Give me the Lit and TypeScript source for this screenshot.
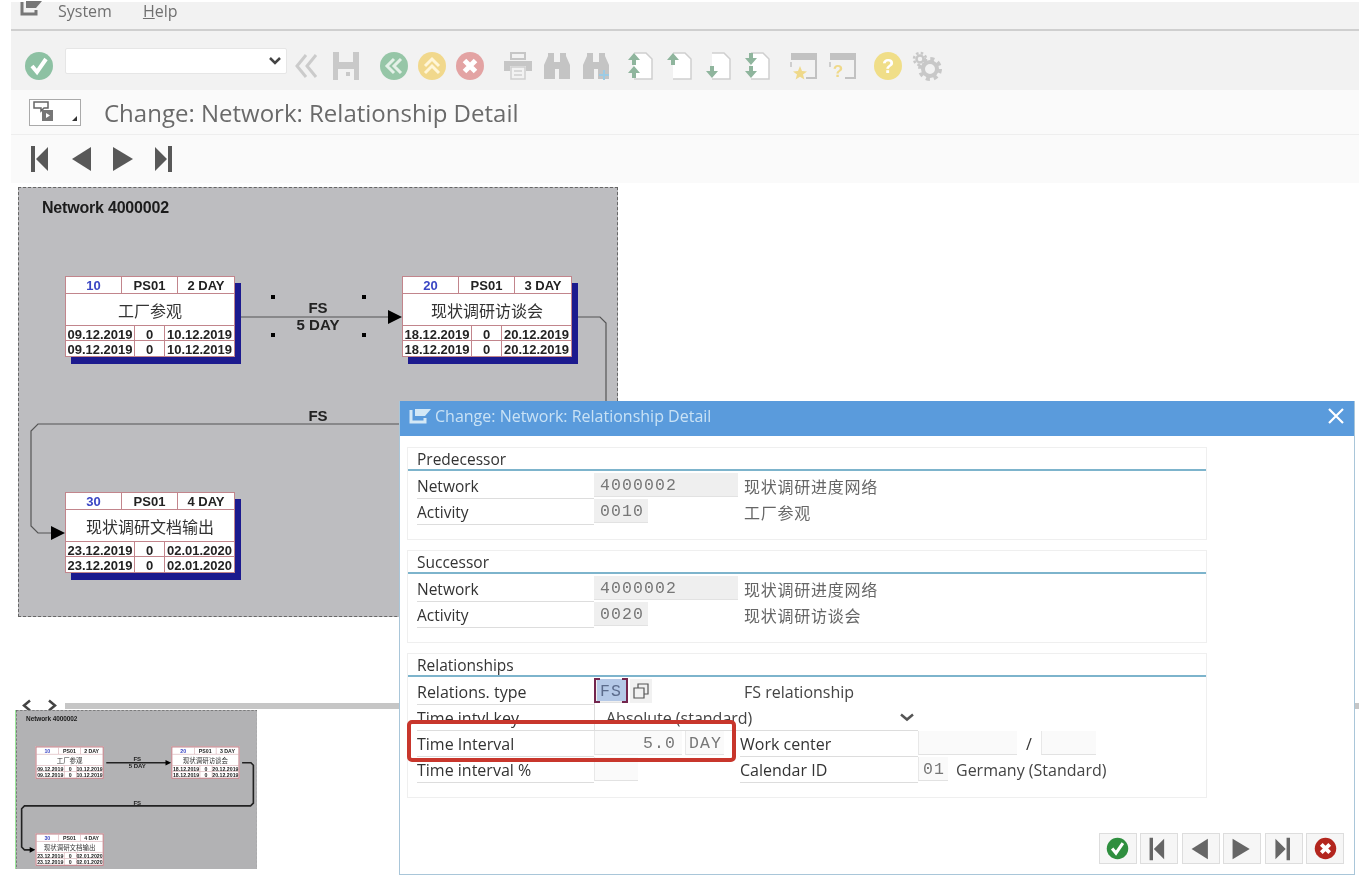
import { LitElement, html, css, svg } from "lit";
import { customElement } from "lit/decorators.js";

const windowIcon = (color: string) => html`<svg class="win-icon" viewBox="0 0 22 16" fill="none">
  <path d="M2 2V14H16V10" stroke=${color} stroke-width="3" />
  <path d="M6 1H22L16 8H6Z" fill=${color} />
</svg>`;

const statusIcon = (color: string, glyph: unknown, size = 30) => html`<svg width=${size} height=${size} viewBox="0 0 30 30">
  <circle cx="15" cy="15" r="14" fill=${color} />
  ${glyph}
</svg>`;

const checkGlyph = svg`<path d="M8 15l5 6 9-13" fill="none" stroke="#fff" stroke-width="4" />`;
const crossGlyph = svg`<path d="M9.5 9.5l11 11M20.5 9.5l-11 11" fill="none" stroke="#fff" stroke-width="5" />`;
const backGlyph = svg`<path d="M15 8l-7 7 7 7M22 8l-7 7 7 7" fill="none" stroke="#e4f1e8" stroke-width="3" />`;
const upGlyph = svg`<path d="M8 15l7-7 7 7M8 22l7-7 7 7" fill="none" stroke="#fff6d8" stroke-width="3" />`;
const helpGlyph = svg`<text x="15" y="22" text-anchor="middle" font-size="20" font-weight="700" font-family="Liberation Sans" fill="#fff">?</text>`;

const icon = (body: unknown) => html`<svg width="30" height="30" viewBox="0 0 30 30">${body}</svg>`;

const binoculars = svg`<path d="M2 28V14L6 5V2H12V11H18V2H24V5L28 14V28H17V18H13V28Z" fill="#c4c4c4" />`;

const page = (arrows: unknown) => icon(svg`
  <path d="M9 2H21L27 8V28H9" fill="#fff" stroke="#cfcfcf" stroke-width="1.5" />
  ${arrows}
`);
const arrowUp = (y: number) => svg`<path d=${`M9 ${y}l-6 7h4v5h4v-5h4z`} fill="#8fb59d" />`;
const arrowDown = (y: number) => svg`<path d=${`M9 ${y + 12}l-6-7h4v-5h4v5h4z`} fill="#8fb59d" />`;

const frame = (mark: unknown) => icon(svg`
  <path d="M3 3H28V27H18" fill="none" stroke="#c2c2c2" stroke-width="2" />
  <path d="M3 3H28V9H3Z" fill="#c2c2c2" />
  <path d="M3 11V16" stroke="#c2c2c2" stroke-width="1.5" />
  ${mark}
`);

const toolbarGroups: unknown[][] = [
  [
    icon(svg`<path d="M14 4L5 15L14 26M24 4L15 15L24 26" fill="none" stroke="#cbcbcb" stroke-width="3" />`),
    icon(svg`<path d="M2 1H28V29H2Z" fill="#c9c9c9" /><rect x="8" y="1" width="14" height="10" fill="#f2f2f2" /><rect x="7" y="18" width="16" height="11" fill="#f2f2f2" /><rect x="15" y="21" width="4" height="4" fill="#c9c9c9" />`),
  ],
  [statusIcon("#96c6a7", backGlyph), statusIcon("#f1d88c", upGlyph), statusIcon("#e3a3a3", crossGlyph)],
  [
    icon(svg`<rect x="8" y="2" width="14" height="6" fill="none" stroke="#c6c6c6" stroke-width="2" /><path d="M1 10H29V20H23V15H7V20H1Z" fill="#c6c6c6" /><path d="M8 16H22V28H8ZM11 20H19M11 24H19" fill="none" stroke="#cfcfcf" stroke-width="1.5" />`),
    icon(binoculars),
    icon(svg`${binoculars}<path d="M23 19V29M18 24H28" stroke="#9ccbe4" stroke-width="2" />`),
  ],
  [
    page(svg`${arrowUp(2)}${arrowUp(15)}`),
    page(svg`${arrowUp(2)}`),
    page(svg`${arrowDown(15)}`),
    page(svg`${arrowDown(2)}${arrowDown(15)}`),
  ],
  [
    frame(svg`<path d="M12 15l2 5 5 .4-4 3.2 1.4 5-4.400-2.800-4.400 2.800 1.400-5-4-3.200 5-.4z" fill="#efd98a" />`),
    frame(svg`<text x="11" y="26" text-anchor="middle" font-size="17" font-weight="700" font-family="Liberation Sans" fill="#efd98a">?</text>`),
  ],
  [
    statusIcon("#f0de88", helpGlyph),
    icon(svg`
      <circle cx="18" cy="18" r="7" fill="none" stroke="#c8c8c8" stroke-width="4" />
      <circle cx="18" cy="18" r="10" fill="none" stroke="#c8c8c8" stroke-width="4" stroke-dasharray="4 3.850" />
      <circle cx="8" cy="8" r="3.500" fill="none" stroke="#c8c8c8" stroke-width="2.500" />
      <circle cx="8" cy="8" r="6" fill="none" stroke="#c8c8c8" stroke-width="2.500" stroke-dasharray="2.500 2.210" />
    `),
  ],
];

const navFirst = svg`<path d="M3 1H7V27H3ZM20 2V26L8 14Z" />`;
const navPrev = svg`<path d="M22 2V26L3 14Z" />`;
const navNext = svg`<path d="M3 2V26L23 14Z" />`;
const navLast = svg`<path d="M17 1H21V27H17ZM4 2V26L16 14Z" />`;

const activities = [
  { x: 65, y: 277, no: "10", days: "2 DAY", name: "工厂参观", start: "09.12.2019", end: "10.12.2019" },
  { x: 402, y: 277, no: "20", days: "3 DAY", name: "现状调研访谈会", start: "18.12.2019", end: "20.12.2019" },
  { x: 65, y: 493, no: "30", days: "4 DAY", name: "现状调研文档输出", start: "23.12.2019", end: "02.01.2020" },
];

@customElement("net-diagram")
export class NetDiagram extends LitElement {
  static styles = css`
    :host {
      display: block;
      font-family: "Liberation Sans", "Noto Sans CJK SC", sans-serif;
    }
    .canvas {
      position: relative;
      box-sizing: border-box;
      width: 600px;
      height: 430px;
      background: #bdbdc0;
      border: 1px dashed #666;
    }
    :host([mini]) .canvas {
      background: #b2b2b4;
      border-width: 2px;
    }
    .heading {
      position: absolute;
      left: 23px;
      top: 11px;
      font-size: 16px;
      font-weight: 700;
      letter-spacing: -0.2px;
      color: #1c1c1c;
    }
    .links {
      position: absolute;
      left: -1px;
      top: -1px;
    }
    .edge {
      fill: none;
      stroke: #555;
      stroke-width: 1.2;
    }
    :host([mini]) .edge {
      stroke: #222;
      stroke-width: 4;
    }
    :host([mini]) .dot {
      display: none;
    }
    .links text {
      font-size: 15px;
      font-weight: 700;
      fill: #222;
      text-anchor: middle;
    }
    .node {
      position: absolute;
      box-sizing: border-box;
      width: 170px;
      height: 81px;
      display: grid;
      grid-template-rows: 17px 1fr 15px 15px;
      background: #fff;
      border: 1px solid #c2858c;
      box-shadow: 6px 7px 0 #1c1a8e;
      font-size: 13px;
      font-weight: 700;
      color: #222;
    }
    :host([mini]) .node {
      box-shadow: none;
      border-width: 3px;
    }
    .cells {
      display: grid;
      text-align: center;
      line-height: 17px;
      border-bottom: 1px solid #c2858c;
      overflow: hidden;
    }
    .cells:last-child {
      border-bottom: none;
    }
    .cells span {
      border-right: 1px solid #c2858c;
      white-space: nowrap;
    }
    .cells span:last-child {
      border-right: none;
    }
    .head {
      grid-template-columns: 1fr 1fr 1fr;
    }
    .dates {
      grid-template-columns: 69px 30px 1fr;
    }
    .no {
      color: #3a46c4;
    }
    .name {
      display: flex;
      align-items: center;
      justify-content: center;
      font-size: 16px;
      font-weight: 400;
      color: #333;
      border-bottom: 1px solid #c2858c;
    }
  `;

  render() {
    return html`
      <div class="canvas">
        <svg class="links" width="600" height="430" viewBox="18 188 600 430">
          <path class="edge" d="M241 318H390" />
          <path d="M388 311L402 318L388 325Z" fill="#000" />
          <path class="edge" d="M578 318H600L606 324V418L599 425H38L31 432V527L38 534H52" />
          <path d="M51 527L65 534L51 541Z" fill="#000" />
          <rect class="dot" x="271" y="296" width="4" height="4" />
          <rect class="dot" x="362" y="296" width="4" height="4" />
          <rect class="dot" x="271" y="334" width="4" height="4" />
          <rect class="dot" x="362" y="334" width="4" height="4" />
          <text x="318" y="314">FS</text>
          <text x="318" y="331">5 DAY</text>
          <text x="318" y="422">FS</text>
        </svg>
        <div class="heading">Network 4000002</div>
        ${activities.map(
          (a) => html`
            <div class="node" style="left:${a.x - 19}px;top:${a.y - 189}px">
              <div class="cells head">
                <span class="no">${a.no}</span><span>PS01</span><span>${a.days}</span>
              </div>
              <div class="name">${a.name}</div>
              <div class="cells dates"><span>${a.start}</span><span>0</span><span>${a.end}</span></div>
              <div class="cells dates"><span>${a.start}</span><span>0</span><span>${a.end}</span></div>
            </div>
          `
        )}
      </div>
    `;
  }
}

@customElement("app-root")
export class AppRoot extends LitElement {
  static styles = css`
    :host {
      display: block;
      position: relative;
      width: 1359px;
      height: 875px;
      overflow: hidden;
      background: #fff;
      font-family: "Open Sans", "Noto Sans CJK SC", sans-serif;
      filter: blur(0.35px);
    }
    .shell {
      margin-left: 11px;
      padding-top: 2px;
    }
    .menu {
      display: flex;
      align-items: center;
      height: 27px;
      border-bottom: 2px solid #cfcfcf;
      background: #f2f2f2;
      font-size: 16px;
      color: #707070;
    }
    .win-icon {
      width: 22px;
      height: 16px;
    }
    .menu .win-icon {
      margin: -16px 16px 0 9px;
    }
    .menu span {
      margin-top: -10px;
      margin-right: 31px;
    }
    .menu u {
      text-decoration-thickness: 1px;
    }
    .toolbar {
      display: flex;
      align-items: center;
      box-sizing: border-box;
      height: 59px;
      padding: 10px 0 0 12px;
      background: #f2f2f2;
    }
    .toolbar .first {
      display: flex;
      margin-left: 1px;
      margin-right: 11px;
    }
    .command {
      position: relative;
      width: 222px;
      height: 26px;
      margin-top: -10px;
      box-sizing: border-box;
      background: #fff;
      border: 1px solid #e6e6e6;
      border-radius: 2px;
    }
    .chevron {
      position: absolute;
      right: 5px;
      top: 8px;
    }
    .group {
      display: flex;
      margin-left: 7px;
    }
    .group:nth-child(3) {
      margin-left: 0;
    }
    .group:nth-child(4) {
      margin-left: 10px;
    }
    .group:nth-child(4) .tool {
      width: 38px;
    }
    .group:nth-child(5) {
      margin-left: 9px;
    }
    .group:nth-child(6) {
      margin-left: 5px;
    }
    .tool {
      display: flex;
      align-items: center;
      justify-content: center;
      width: 39px;
      height: 30px;
    }
    .titlebar {
      display: flex;
      align-items: center;
      height: 44px;
      background: #fafafa;
      border-bottom: 1px solid #eee;
      color: #6a6a6a;
      font-size: 24px;
    }
    .variant {
      position: relative;
      display: flex;
      align-items: center;
      box-sizing: border-box;
      width: 52px;
      height: 27px;
      margin: 0 23px 0 18px;
      padding-left: 2px;
      border: 1px solid #aaa;
      background: #fff;
    }
    .variant::after {
      content: "";
      position: absolute;
      right: 3px;
      bottom: 4px;
      border-left: 5px solid transparent;
      border-bottom: 5px solid #333;
    }
    .nav {
      display: flex;
      align-items: center;
      gap: 13px;
      height: 48px;
      padding-left: 17px;
      background: #fafafa;
      fill: #585858;
    }
    .nav svg {
      display: block;
    }
    .work {
      padding: 4px 0 0 7px;
    }
    .scroller {
      display: flex;
      align-items: center;
      height: 13px;
      margin-top: 82px;
      margin-left: 3px;
    }
    .scroller svg {
      margin-right: 13px;
    }
    .scroller svg + svg {
      margin-right: 7px;
    }
    .thumb {
      flex: 1;
      height: 6px;
      background: #c6c6c6;
    }
    .minimap {
      width: 242px;
      height: 159px;
      margin-left: -3px;
      margin-top: -2px;
      overflow: hidden;
      border-left: 1px solid #9be69b;
      box-sizing: border-box;
    }
    .minimap net-diagram {
      width: 600px;
      transform: scale(0.403);
      transform-origin: 0 0;
    }

    .dialog {
      position: absolute;
      left: 399px;
      top: 401px;
      box-sizing: border-box;
      width: 956px;
      height: 474px;
      background: #fff;
      border: 1px solid #a9c6d9;
      border-top: none;
      font-size: 15.5px;
      color: #333;
    }
    .dialog-title {
      display: flex;
      align-items: center;
      gap: 4px;
      box-sizing: border-box;
      height: 35px;
      padding: 0 9px 5px;
      background: #5a9bdc;
      color: #c9e2f5;
      font-size: 16px;
    }
    .close {
      margin-left: auto;
      margin-right: 1px;
    }
    .groups {
      display: flex;
      flex-direction: column;
      gap: 10px;
      width: 800px;
      margin: 11px 0 0 7px;
    }
    .box {
      padding-bottom: 16px;
      border: 1px solid #efefef;
    }
    .legend {
      height: 21px;
      padding-left: 9px;
      line-height: 23px;
      border-bottom: 2px solid #7db4cc;
    }
    .row {
      display: grid;
      grid-template-columns: 177px 146px 178px 1fr;
      height: 26px;
      margin-left: 9px;
      line-height: 24px;
    }
    .relations .row {
      font-size: 16px;
    }
    .lbl,
    .plain {
      box-sizing: border-box;
      padding-top: 3px;
      white-space: nowrap;
    }
    .lbl {
      border-bottom: 1px solid #ddd;
    }
    .plain {
      padding-left: 4px;
      color: #444;
    }
    .plain.flush {
      padding-left: 0;
    }
    .cjk {
      font-family: "Noto Sans CJK SC", sans-serif;
      font-size: 16px;
      letter-spacing: 0.750px;
      color: #666;
    }
    .fieldset {
      display: flex;
      gap: 3px;
    }
    .field {
      box-sizing: border-box;
      height: 24px;
      margin-top: 2px;
      padding-left: 6px;
      background: #efefef;
      border-bottom: 1px solid #e2e2e2;
      font-family: "Liberation Mono", monospace;
      font-size: 16.5px;
      letter-spacing: 1.100px;
      line-height: 25px;
      color: #777;
    }
    .field.open {
      background: #fafafa;
      border-left: 1px solid #e8e8e8;
    }
    .w144 { width: 144px; }
    .w54 { width: 54px; }
    .w44 { width: 44px; }
    .w88 { width: 88px; padding: 0 6px 0 0; text-align: right; }
    .w39 { width: 39px; padding-left: 3px; }
    .w30 { width: 30px; padding-left: 4px; }
    .w99 { width: 99px; }
    .w55 { width: 55px; }
    .focus {
      position: relative;
      width: 34px;
      padding-left: 3px;
    }
    .focus b {
      display: block;
      height: 22px;
      padding-left: 3px;
      background: #b5c9e7;
      font-weight: 400;
      color: #5c6c8c;
    }
    .focus::before,
    .focus::after {
      content: "";
      position: absolute;
      top: -1px;
      bottom: -1px;
      width: 4px;
      border: 2px solid #74264e;
    }
    .focus::before {
      left: 0;
      border-right: none;
    }
    .focus::after {
      right: 0;
      border-left: none;
    }
    .copy {
      display: flex;
      align-items: center;
      justify-content: center;
      box-sizing: border-box;
      width: 22px;
      height: 24px;
      margin-top: 2px;
      margin-left: -1px;
      background: #f1f1f1;
    }
    .select {
      grid-column: span 2;
      display: flex;
      align-items: center;
      justify-content: space-between;
      padding: 2px 4px 0 11px;
      border-left: 1px solid #ddd;
      border-bottom: 1px solid #ddd;
      color: #444;
    }
    .wide {
      display: flex;
      gap: 8px;
    }
    .wide.pair {
      gap: 0;
    }
    .slash {
      width: 24px;
      padding-top: 3px;
      text-align: center;
    }
    .highlight {
      position: absolute;
      left: 7px;
      top: 319px;
      box-sizing: border-box;
      width: 329px;
      height: 42px;
      border: 4px solid #c8362c;
      border-radius: 5px;
    }
    .actions {
      position: absolute;
      right: 10px;
      bottom: 10px;
      display: flex;
      gap: 3.500px;
      fill: #666;
    }
    .actions button {
      display: flex;
      align-items: center;
      justify-content: center;
      width: 38px;
      height: 31px;
      padding: 0;
      background: #f6f6f6;
      border: 1px solid #ddd;
    }
  `;

  private renderRelations() {
    return html`
      <div class="row">
        <div class="lbl">Relations. type</div>
        <div class="fieldset">
          <div class="field focus"><b>FS</b></div>
          <div class="copy">
            <svg width="18" height="18" viewBox="0 0 18 18" fill="none" stroke="#555" stroke-width="1.200">
              <path d="M2 6H12V16H2ZM6 6V2H16V12H12" />
            </svg>
          </div>
        </div>
        <div class="plain">FS relationship</div>
      </div>
      <div class="row">
        <div class="lbl">Time intvl key</div>
        <div class="select">
          Absolute (standard)
          <svg width="14" height="9" viewBox="0 0 14 9" fill="none" stroke="#555" stroke-width="2.500"><path d="M1 1.500l6 5 6-5" /></svg>
        </div>
      </div>
      <div class="row">
        <div class="lbl">Time Interval</div>
        <div class="fieldset">
          <div class="field open w88">5.0</div>
          <div class="field open w39">DAY</div>
        </div>
        <div class="lbl">Work center</div>
        <div class="wide pair">
          <div class="field open w99"></div>
          <div class="slash">/</div>
          <div class="field open w55"></div>
        </div>
      </div>
      <div class="row">
        <div class="lbl">Time interval %</div>
        <div class="fieldset"><div class="field open w44"></div></div>
        <div class="lbl">Calendar ID</div>
        <div class="wide">
          <div class="field open w30">01</div>
          <div class="plain flush">Germany (Standard)</div>
        </div>
      </div>
    `;
  }

  render() {
    return html`
      <div class="shell">
        <div class="menu">
          ${windowIcon("#777")}
          <span>System</span>
          <span><u>H</u>elp</span>
        </div>
        <div class="toolbar">
          <div class="first">${statusIcon("#8dc1a3", checkGlyph)}</div>
          <div class="command">
            <svg class="chevron" width="12" height="8" viewBox="0 0 12 8" fill="none" stroke="#444" stroke-width="2.500"><path d="M1 1l5 5 5-5" /></svg>
          </div>
          ${toolbarGroups.map(
            (group) => html`<div class="group">${group.map((tool) => html`<div class="tool">${tool}</div>`)}</div>`
          )}
        </div>
        <div class="titlebar">
          <div class="variant">
            <svg width="28" height="22" viewBox="0 0 28 22">
              <path d="M2 1H16V7H12L9 10V7H2Z" fill="#fff" stroke="#666" stroke-width="1.500" />
              <rect x="10" y="9" width="11" height="11" fill="#777" />
              <path d="M14 12l4 2.500-4 2.500Z" fill="#fff" />
            </svg>
          </div>
          Change: Network: Relationship Detail
        </div>
        <div class="nav">
          <svg width="28" height="28" viewBox="0 0 28 28">${navFirst}</svg>
          <svg width="28" height="28" viewBox="0 0 28 28">${navPrev}</svg>
          <svg width="28" height="28" viewBox="0 0 28 28">${navNext}</svg>
          <svg width="28" height="28" viewBox="0 0 28 28">${navLast}</svg>
        </div>
        <div class="work">
          <net-diagram></net-diagram>
          <div class="scroller">
            <svg width="12" height="13" viewBox="0 0 12 13" fill="none" stroke="#444" stroke-width="2.500"><path d="M9 1.500L3 6.500l6 5" /></svg>
            <svg width="12" height="13" viewBox="0 0 12 13" fill="none" stroke="#444" stroke-width="2.500"><path d="M3 1.500l6 5-6 5" /></svg>
            <div class="thumb"></div>
          </div>
          <div class="minimap"><net-diagram mini></net-diagram></div>
        </div>
      </div>

      <div class="dialog">
        <div class="dialog-title">
          ${windowIcon("#d3e8f6")}
          Change: Network: Relationship Detail
          <svg class="close" width="16" height="16" viewBox="0 0 16 16" fill="none" stroke="#fff" stroke-width="2.200"><path d="M1 1l14 14M15 1L1 15" /></svg>
        </div>
        <div class="groups">
          <div class="box">
            <div class="legend">Predecessor</div>
            <div class="row">
              <div class="lbl">Network</div>
              <div class="field w144">4000002</div>
              <div class="plain cjk">现状调研进度网络</div>
            </div>
            <div class="row">
              <div class="lbl">Activity</div>
              <div class="field w54">0010</div>
              <div class="plain cjk">工厂参观</div>
            </div>
          </div>
          <div class="box">
            <div class="legend">Successor</div>
            <div class="row">
              <div class="lbl">Network</div>
              <div class="field w144">4000002</div>
              <div class="plain cjk">现状调研进度网络</div>
            </div>
            <div class="row">
              <div class="lbl">Activity</div>
              <div class="field w54">0020</div>
              <div class="plain cjk">现状调研访谈会</div>
            </div>
          </div>
          <div class="box relations">
            <div class="legend">Relationships</div>
            ${this.renderRelations()}
          </div>
        </div>
        <div class="highlight"></div>
        <div class="actions">
          <button>${statusIcon("#2f8f3f", checkGlyph, 23)}</button>
          <button><svg width="24" height="24" viewBox="0 0 28 28">${navFirst}</svg></button>
          <button><svg width="24" height="24" viewBox="0 0 28 28">${navPrev}</svg></button>
          <button><svg width="24" height="24" viewBox="0 0 28 28">${navNext}</svg></button>
          <button><svg width="24" height="24" viewBox="0 0 28 28">${navLast}</svg></button>
          <button>${statusIcon("#b3261e", crossGlyph, 23)}</button>
        </div>
      </div>
    `;
  }
}
